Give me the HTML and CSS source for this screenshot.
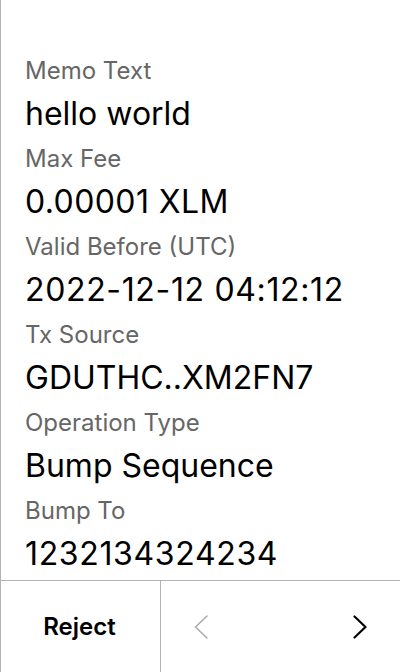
FILE: index.html
```html
<!DOCTYPE html>
<html>
<head>
<meta charset="utf-8">
<link rel="stylesheet" href="styles.css">
</head>
<body>
<div class="screen">
  <div class="fields">
    <div class="field"><div class="label">Memo Text</div><div class="value">hello world</div></div>
    <div class="field"><div class="label">Max Fee</div><div class="value num-short">0.00001 XLM</div></div>
    <div class="field"><div class="label">Valid Before (UTC)</div><div class="value num">2022-12-12 04:12:12</div></div>
    <div class="field"><div class="label">Tx Source</div><div class="value">GDUTHC..XM2FN7</div></div>
    <div class="field"><div class="label">Operation Type</div><div class="value">Bump Sequence</div></div>
    <div class="field"><div class="label">Bump To</div><div class="value num">1232134324234</div></div>
  </div>
  <div class="actions">
    <div class="reject">Reject</div>
    <div class="nav">
      <div class="nav-btn">
        <svg width="14" height="24" viewBox="0 0 14 24"><polyline points="13,1 1.5,12 13,23" fill="none" stroke="#ababab" stroke-width="1.6" stroke-linecap="round" stroke-linejoin="round"/></svg>
      </div>
      <div class="nav-btn">
        <svg width="14" height="24" viewBox="0 0 14 24"><polyline points="1.5,1.5 12.5,12 1.5,22.5" fill="none" stroke="#000" stroke-width="2.2" stroke-linecap="round" stroke-linejoin="round"/></svg>
      </div>
    </div>
  </div>
</div>
</body>
</html>
```

FILE: styles.css
```css
* { box-sizing: border-box; }
html, body { margin: 0; padding: 0; background: #fff; }
body { font-family: Inter, "Noto Sans", sans-serif; color: #000; }
.screen {
  width: 400px;
  height: 672px;
  border-left: 1px solid #b3b3b3;
  display: flex;
  flex-direction: column;
}
.fields {
  flex: 1;
  min-height: 0;
  overflow: hidden;
  padding: 52.5px 24px 0 24px;
}
.field { padding-top: 1.9px; }
.label {
  font-size: 24px;
  line-height: 33px;
  height: 33px;
  color: #666;
  white-space: nowrap;
}
.value {
  font-size: 32px;
  line-height: 53px;
  height: 53px;
  color: #000;
  white-space: nowrap;
}
.value.num { letter-spacing: 0.65px; }
.value.num-short { letter-spacing: 0.4px; }
.actions {
  height: 92px;
  flex: none;
  border-top: 1px solid #b3b3b3;
  display: flex;
}
.reject {
  width: 160px;
  border-right: 1px solid #b3b3b3;
  display: flex;
  align-items: center;
  justify-content: center;
  font-size: 24px;
  font-weight: 600;
  padding-right: 2px;
}
.nav {
  flex: 1;
  display: flex;
  justify-content: space-between;
}
.nav-btn {
  width: 80px;
  display: flex;
  align-items: center;
  justify-content: center;
}
.nav-btn svg { display: block; }
```
